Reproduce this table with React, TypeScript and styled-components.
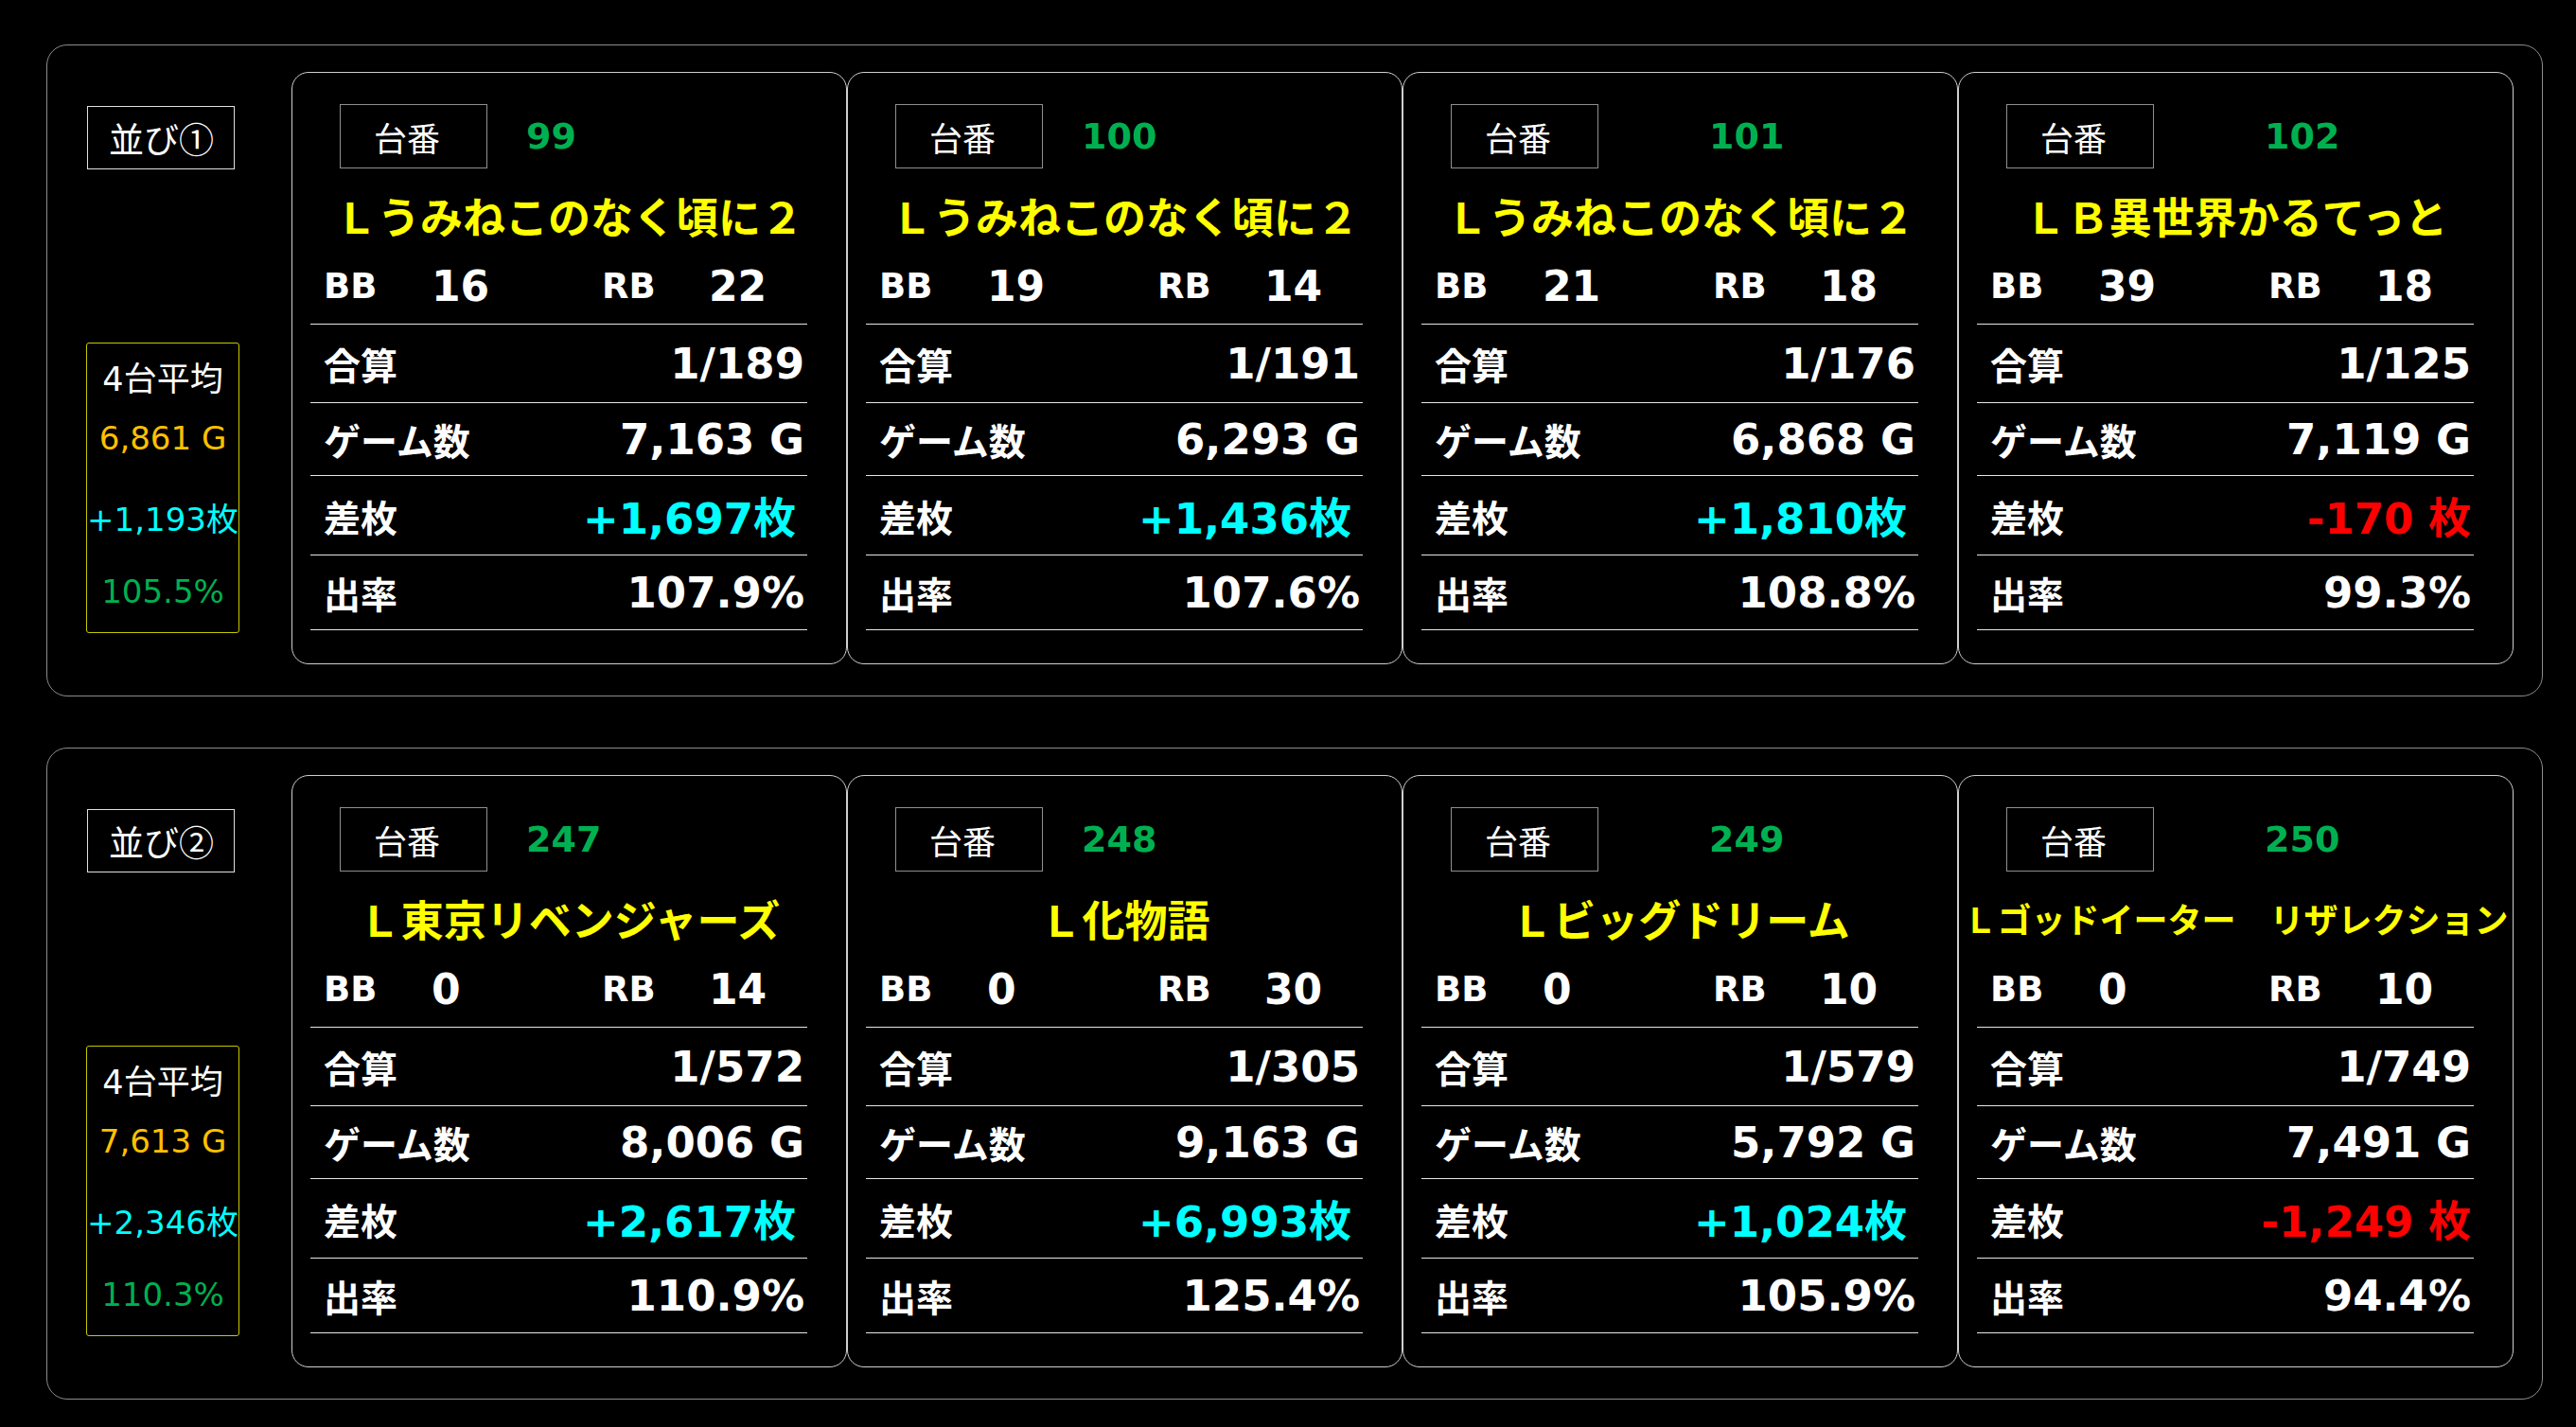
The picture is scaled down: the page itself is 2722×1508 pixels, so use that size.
import React from 'react';
import styled, { createGlobalStyle } from 'styled-components';

const GlobalStyle = createGlobalStyle`
  html, body { margin: 0; padding: 0; background: #000; }
  body {
    font-family: "DejaVu Sans", "Noto Sans CJK JP", sans-serif;
    color: #fff;
  }
  * { box-sizing: border-box; }
`;

const Page = styled.div`
  display: flex;
  flex-direction: column;
  gap: 54px;
  padding: 47px 0 29px 49px;
  background: #000;
  min-height: 1508px;
`;

const Panel = styled.section`
  width: 2638px;
  height: 689px;
  border: 1px solid #8c8c8c;
  border-radius: 22px;
  display: flex;
  padding-top: 28px;
`;

const LeftCol = styled.div`
  width: 258px;
  flex-shrink: 0;
  display: flex;
  flex-direction: column;
  padding-top: 36px;
  padding-left: 42px;
`;

const NarabiBox = styled.div`
  width: 156px;
  height: 67px;
  border: 1px solid #e0e0e0;
  display: flex;
  align-items: center;
  padding-left: 22px;
  font-family: "Noto Sans CJK JP", "DejaVu Sans", sans-serif;
  font-size: 37px;
  white-space: nowrap;
`;

const AvgBox = styled.div`
  margin-top: 183px;
  margin-left: -1px;
  width: 162px;
  height: 307px;
  border: 1px solid #c8c800;
  border-radius: 3px;
  display: flex;
  flex-direction: column;
  align-items: center;
`;

const AvgLine = styled.div<{ $h: number; $color: string; $size?: number }>`
  height: ${(p) => p.$h}px;
  display: flex;
  align-items: center;
  justify-content: center;
  font-size: ${(p) => p.$size ?? 34}px;
  color: ${(p) => p.$color};
  white-space: nowrap;
`;

const Cards = styled.div`
  display: flex;
`;

const Card = styled.div`
  width: 587px;
  height: 626px;
  border: 1px solid #cfcfcf;
  border-radius: 18px;
  padding-top: 33px;
  flex-shrink: 0;
`;

const Header = styled.div`
  display: flex;
  align-items: center;
  padding-left: 50px;
  height: 68px;
`;

const TaibanBox = styled.div`
  width: 156px;
  height: 68px;
  border: 1px solid #8f8f8f;
  display: flex;
  align-items: center;
  padding-left: 35px;
  font-size: 35px;
`;

const MachineNo = styled.div<{ $offset: number }>`
  margin-left: ${(p) => p.$offset}px;
  color: #00b050;
  font-weight: 700;
  font-size: 38px;
`;

const Title = styled.div<{ $size: number }>`
  height: 98px;
  display: flex;
  align-items: center;
  justify-content: center;
  color: #ffff00;
  font-weight: 700;
  font-size: ${(p) => p.$size}px;
  white-space: nowrap;
`;

const Stats = styled.div`
  margin-left: 19px;
  width: 525px;
`;

const BBRow = styled.div`
  height: 67px;
  padding: 0 0 14px 14px;
  border-bottom: 1px solid #e6e6e6;
  display: flex;
  align-items: center;
`;

const BBCell = styled.span<{ $w?: number; $size: number }>`
  width: ${(p) => (p.$w ? `${p.$w}px` : 'auto')};
  font-size: ${(p) => p.$size}px;
  font-weight: 700;
`;

const StatRow = styled.div<{ $h: number }>`
  height: ${(p) => p.$h}px;
  border-bottom: 1px solid #e6e6e6;
  display: flex;
  align-items: center;
  justify-content: space-between;
  padding: 0 3px 0 14px;
`;

const StatLabel = styled.span`
  font-size: 39px;
  font-weight: 700;
`;

const StatValue = styled.span<{ $color?: string; $pad?: number }>`
  font-size: 45px;
  font-weight: 700;
  color: ${(p) => p.$color || '#fff'};
  padding-right: ${(p) => p.$pad || 0}px;
  white-space: nowrap;
`;

type CardData = {
  no: string;
  title: string;
  titleSize?: number;
  bb: string;
  rb: string;
  total: string;
  games: string;
  diff: string;
  rate: string;
};

type RowData = {
  label: string;
  avgGames: string;
  avgDiff: string;
  avgRate: string;
  cards: CardData[];
};

const data: RowData[] = [
  {
    label: '並び①',
    avgGames: '6,861 G',
    avgDiff: '+1,193枚',
    avgRate: '105.5%',
    cards: [
      { no: '99', title: 'Ｌうみねこのなく頃に２', bb: '16', rb: '22', total: '1/189', games: '7,163 G', diff: '+1,697枚', rate: '107.9%' },
      { no: '100', title: 'Ｌうみねこのなく頃に２', bb: '19', rb: '14', total: '1/191', games: '6,293 G', diff: '+1,436枚', rate: '107.6%' },
      { no: '101', title: 'Ｌうみねこのなく頃に２', bb: '21', rb: '18', total: '1/176', games: '6,868 G', diff: '+1,810枚', rate: '108.8%' },
      { no: '102', title: 'ＬＢ異世界かるてっと', bb: '39', rb: '18', total: '1/125', games: '7,119 G', diff: '-170 枚', rate: '99.3%' },
    ],
  },
  {
    label: '並び②',
    avgGames: '7,613 G',
    avgDiff: '+2,346枚',
    avgRate: '110.3%',
    cards: [
      { no: '247', title: 'Ｌ東京リベンジャーズ', bb: '0', rb: '14', total: '1/572', games: '8,006 G', diff: '+2,617枚', rate: '110.9%' },
      { no: '248', title: 'Ｌ化物語', bb: '0', rb: '30', total: '1/305', games: '9,163 G', diff: '+6,993枚', rate: '125.4%' },
      { no: '249', title: 'Ｌビッグドリーム', bb: '0', rb: '10', total: '1/579', games: '5,792 G', diff: '+1,024枚', rate: '105.9%' },
      { no: '250', title: 'Ｌゴッドイーター　リザレクション', titleSize: 36, bb: '0', rb: '10', total: '1/749', games: '7,491 G', diff: '-1,249 枚', rate: '94.4%' },
    ],
  },
];

const MachineCard: React.FC<{ c: CardData; index: number }> = ({ c, index }) => {
  const negative = c.diff.startsWith('-');
  return (
    <Card>
      <Header>
        <TaibanBox>台番</TaibanBox>
        <MachineNo $offset={index < 2 ? 41 : 117}>{c.no}</MachineNo>
      </Header>
      <Title $size={c.titleSize ?? 45}>{c.title}</Title>
      <Stats>
        <BBRow>
          <BBCell $w={114} $size={37}>BB</BBCell>
          <BBCell $w={180} $size={44}>{c.bb}</BBCell>
          <BBCell $w={113} $size={37}>RB</BBCell>
          <BBCell $size={44}>{c.rb}</BBCell>
        </BBRow>
        <StatRow $h={83}>
          <StatLabel>合算</StatLabel>
          <StatValue>{c.total}</StatValue>
        </StatRow>
        <StatRow $h={77}>
          <StatLabel>ゲーム数</StatLabel>
          <StatValue>{c.games}</StatValue>
        </StatRow>
        <StatRow $h={84}>
          <StatLabel>差枚</StatLabel>
          <StatValue $color={negative ? '#ff0000' : '#00ffff'} $pad={negative ? 0 : 9}>
            {c.diff}
          </StatValue>
        </StatRow>
        <StatRow $h={79}>
          <StatLabel>出率</StatLabel>
          <StatValue>{c.rate}</StatValue>
        </StatRow>
      </Stats>
    </Card>
  );
};

export default function App() {
  return (
    <>
      <GlobalStyle />
      <Page>
        {data.map((row) => (
          <Panel key={row.label}>
            <LeftCol>
              <NarabiBox>{row.label}</NarabiBox>
              <AvgBox>
                <AvgLine $h={68} $color="#ffffff" $size={35}>4台平均</AvgLine>
                <AvgLine $h={64} $color="#ffc000">{row.avgGames}</AvgLine>
                <AvgLine $h={102} $color="#00ffff">{row.avgDiff}</AvgLine>
                <AvgLine $h={56} $color="#00b050">{row.avgRate}</AvgLine>
              </AvgBox>
            </LeftCol>
            <Cards>
              {row.cards.map((c, i) => (
                <MachineCard key={c.no} c={c} index={i} />
              ))}
            </Cards>
          </Panel>
        ))}
      </Page>
    </>
  );
}
